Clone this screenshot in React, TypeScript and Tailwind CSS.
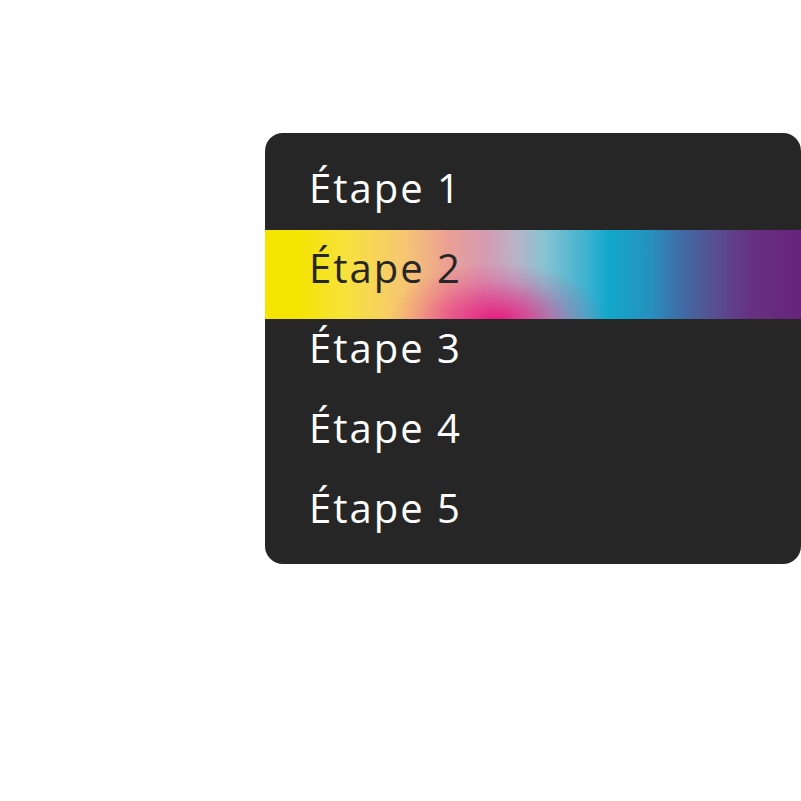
import React from 'react';

const steps = ['Étape 1', 'Étape 2', 'Étape 3', 'Étape 4', 'Étape 5'];
const active = 1;

export default function App() {
  return (
    <div className="w-[801px] h-[801px] bg-white overflow-hidden font-['Open_Sans',sans-serif]">
      <div className="ml-[265px] mt-[133px] w-[536px] h-[431px] bg-[#262626] rounded-[18px] overflow-hidden pt-[17px] pb-[14px]">
        {steps.map((s, i) =>
          i === active ? (
            <div
              key={s}
              className="h-[89px] -mb-[9px] pb-[13px] pl-[44px] flex items-center text-[#262626] bg-[radial-gradient(ellipse_110px_60px_at_232px_92px,#e6197c_0%,rgba(230,25,124,0.6)_35%,rgba(230,25,124,0.2)_70%,rgba(230,25,124,0)_100%),linear-gradient(90deg,#f5e400_0%,#f5e400_6%,#f7e23c_15%,#f6c672_26%,#eba093_34%,#d69bb2_41%,#b7b4c8_47%,#88c3d1_52%,#3db2cf_60%,#12a8cb_64%,#2690bf_72%,#3d70a8_77%,#584e91_84%,#66307f_91%,#68237f_100%)]"
            >
              <span className="text-[40px] font-normal leading-none tracking-[2px]">{s}</span>
            </div>
          ) : (
            <div key={s} className="h-[80px] pb-[4px] pl-[44px] flex items-center text-white">
              <span className="text-[40px] font-normal leading-none tracking-[2px]">{s}</span>
            </div>
          )
        )}
      </div>
    </div>
  );
}
